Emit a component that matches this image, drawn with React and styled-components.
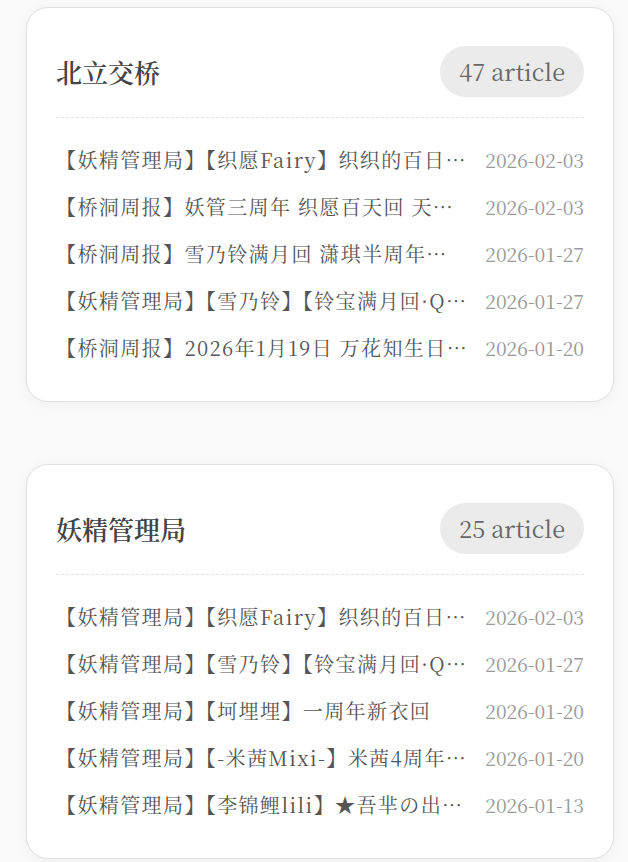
import React from "react";
import styled, { createGlobalStyle } from "styled-components";

const GlobalStyle = createGlobalStyle`
  html, body {
    margin: 0;
    padding: 0;
    background: #fafafa;
  }
  body {
    font-family: "Noto Serif CJK SC", "Noto Sans CJK SC", "Liberation Serif", serif;
    color: #555;
  }
`;

const groups = [
  {
    name: "北立交桥",
    count: 47,
    posts: [
      { title: "【妖精管理局】【织愿Fairy】织织的百日回 咕咕咕", date: "2026-02-03" },
      { title: "【桥洞周报】妖管三周年 织愿百天回 天使回归", date: "2026-02-03" },
      { title: "【桥洞周报】雪乃铃满月回 潇琪半周年纪念", date: "2026-01-27" },
      { title: "【妖精管理局】【雪乃铃】【铃宝满月回·Q版", date: "2026-01-27" },
      { title: "【桥洞周报】2026年1月19日 万花知生日会", date: "2026-01-20" },
    ],
  },
  {
    name: "妖精管理局",
    count: 25,
    posts: [
      { title: "【妖精管理局】【织愿Fairy】织织的百日回 咕咕咕", date: "2026-02-03" },
      { title: "【妖精管理局】【雪乃铃】【铃宝满月回·Q版", date: "2026-01-27" },
      { title: "【妖精管理局】【坷埋埋】一周年新衣回", date: "2026-01-20" },
      { title: "【妖精管理局】【-米茜Mixi-】米茜4周年纪念", date: "2026-01-20" },
      { title: "【妖精管理局】【李锦鲤lili】★吾芈の出道一周年★", date: "2026-01-13" },
    ],
  },
];

const Page = styled.main`
  display: flex;
  flex-direction: column;
  gap: 62px;
  padding: 7px 14px 8px 26px;
`;

const Card = styled.section`
  background: #fff;
  border: 1px solid #e0e0e0;
  border-radius: 22px;
  box-shadow: 0 2px 14px rgba(0, 0, 0, 0.05);
  padding: 38px 29px 30px 29px;
`;

const Header = styled.header`
  display: flex;
  align-items: center;
  justify-content: space-between;
  padding-bottom: 20px;
  border-bottom: 1px dashed #e3e3e3;
`;

const Title = styled.h2`
  margin: 0;
  font-size: 26px;
  font-weight: 600;
  color: #444;
`;

const Badge = styled.span`
  background: #ebebeb;
  color: #666;
  border-radius: 999px;
  padding: 10px 19px;
  font-size: 23.5px;
  line-height: 31px;
`;

const List = styled.ul`
  list-style: none;
  margin: 0;
  padding: 18px 0 0;
`;

const Row = styled.li`
  display: flex;
  align-items: center;
  gap: 18px;
  height: 47px;
  font-size: 20px;
`;

const PostTitle = styled.span`
  flex: 1;
  min-width: 0;
  white-space: nowrap;
  overflow: hidden;
  text-overflow: ellipsis;
  letter-spacing: 1.4px;
  color: #555;
`;

const PostDate = styled.span`
  flex-shrink: 0;
  font-size: 19.4px;
  color: #999;
`;

export default function App() {
  return (
    <>
      <GlobalStyle />
      <Page>
        {groups.map((g) => (
          <Card key={g.name}>
            <Header>
              <Title>{g.name}</Title>
              <Badge>{g.count} article</Badge>
            </Header>
            <List>
              {g.posts.map((p, i) => (
                <Row key={i}>
                  <PostTitle>{p.title}</PostTitle>
                  <PostDate>{p.date}</PostDate>
                </Row>
              ))}
            </List>
          </Card>
        ))}
      </Page>
    </>
  );
}
